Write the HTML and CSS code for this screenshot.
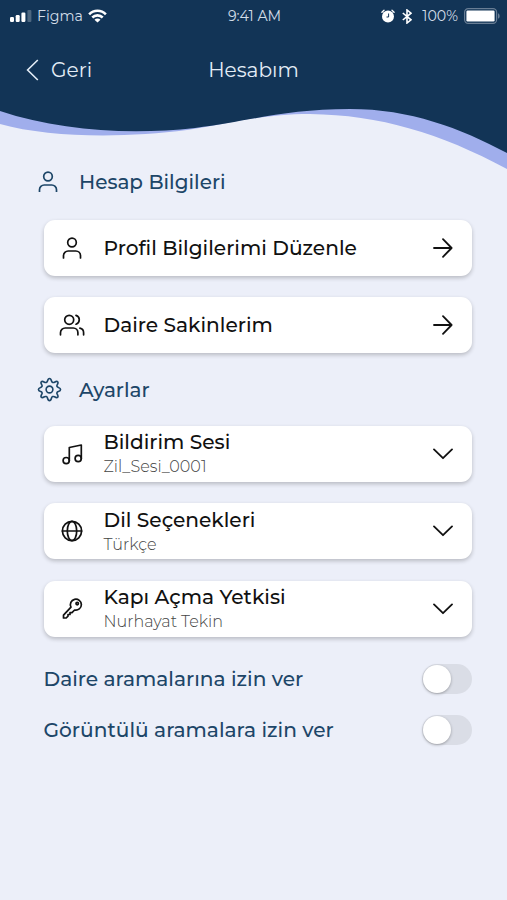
FILE: index.html
```
<!DOCTYPE html>
<html lang="tr">
  <head>
    <meta charset="UTF-8" />
    <meta name="viewport" content="width=device-width, initial-scale=1.0" />
    <title>Hesabım</title>
    <link rel="stylesheet" href="styles.css">
  </head>
  <body>
    <header class="header">
      <div class="status">
        <div class="status-left">
          <svg class="signal" width="22" height="12" viewBox="0 0 22 12" fill="#fff">
            <rect x="0" y="7" width="4" height="5" rx="1.2" />
            <rect x="5.7" y="5" width="4" height="7" rx="1.2" />
            <rect x="11.4" y="2.5" width="4" height="9.5" rx="1.2" />
            <rect x="17.4" y="0" width="4" height="12" rx="1" opacity="0.25" />
          </svg>
          <span class="carrier">Figma</span>
          <svg class="wifi" width="19" height="14" viewBox="0 0 20 14" fill="none" stroke="#fff" stroke-width="2.7">
            <path d="M1.2 5.2C6 .3 14 .3 18.8 5.2" />
            <path d="M4.5 8.6c3-3 8-3 11 0" />
            <path d="M10 13.8L6.8 10.9c1.8-1.6 4.6-1.6 6.4 0z" fill="#fff" stroke="none" />
          </svg>
        </div>
        <span class="time">9:41 AM</span>
        <div class="status-right">
          <svg width="14" height="14" viewBox="0 0 14 14">
            <circle cx="7" cy="7.5" r="6" fill="#fff" />
            <path d="M.9 3.2L3 1.2M13.1 3.2L11 1.2" stroke="#fff" stroke-width="1.3" stroke-linecap="round" />
            <path d="M7.6 4.5v3.5H5.5" fill="none" stroke="#123456" stroke-width="1" />
          </svg>
          <svg class="bluetooth" width="10" height="15" viewBox="0 0 10 15" fill="none" stroke="#fff" stroke-width="1.6">
            <path d="M.8 4L9 10.8 5 14V1l4 3.2L.8 11" />
          </svg>
          <span class="percent">100%</span>
          <svg class="battery" width="36" height="16" viewBox="0 0 36 16">
            <rect x=".6" y=".6" width="32" height="14.8" rx="3.6" fill="none" stroke="#687d94" stroke-width="1.2" />
            <rect x="2.4" y="2.6" width="28.2" height="10.8" rx="1.2" fill="#fff" />
            <path d="M34 5.2c2.2.8 2.2 4.8 0 5.6z" fill="#687d94" />
          </svg>
        </div>
      </div>
      <nav class="nav">
        <a class="back" href="#">
          <svg width="14" height="24" viewBox="0 0 14 24" fill="none" stroke="#e4edf6" stroke-width="1.6">
            <path d="M12.8 2L2.6 12l10.2 10" />
          </svg>
          <span>Geri</span>
        </a>
        <h1>Hesabım</h1>
      </nav>
    </header>
    <svg class="wave" width="507" height="70" viewBox="0 100 507 70">
      <path fill="#a0aeec" d="M0 100V124C50 138 125 138 187 130C230 124 260 114 310 114C380 115 440 133 507 169V100z" />
      <path fill="#123456" d="M0 99V111C60 131 130 135 195 128C250 121 285 109 350 109C410 109 460 128 507 153V99z" />
    </svg>

    <main>
      <h2 class="section">
        <svg width="24" height="24" viewBox="0 0 24 24">
          <circle cx="12" cy="6.5" r="4.3" />
          <path d="M3.5 22v-2.3a4.7 4.7 0 0 1 4.7-4.7h7.6a4.7 4.7 0 0 1 4.7 4.7V22" />
        </svg>
        <span>Hesap Bilgileri</span>
      </h2>
      <div class="cards">
        <a class="card" href="#">
          <svg class="icon" width="28" height="24" viewBox="0 0 28 24">
            <circle cx="14" cy="6.5" r="4.3" />
            <path d="M5.5 22v-2.3a4.7 4.7 0 0 1 4.7-4.7h7.6a4.7 4.7 0 0 1 4.7 4.7V22" />
          </svg>
          <span class="name">Profil Bilgilerimi Düzenle</span>
          <svg class="end" width="20" height="20" viewBox="0 0 20 20">
            <path d="M1 10h17.4M10 1.2l8.6 8.8-8.6 8.8" />
          </svg>
        </a>
        <a class="card" href="#">
          <svg class="icon" width="28" height="24" viewBox="0 0 28 24">
            <circle cx="11.2" cy="6.8" r="4.5" />
            <path d="M2.5 21.8v-2.1a4.7 4.7 0 0 1 4.7-4.7h8a4.7 4.7 0 0 1 4.7 4.7v2.1M18 2.4a4.6 4.6 0 0 1 0 8.8M21.9 15.1a4.7 4.7 0 0 1 3.7 4.6v2.1" />
          </svg>
          <span class="name">Daire Sakinlerim</span>
          <svg class="end" width="20" height="20" viewBox="0 0 20 20">
            <path d="M1 10h17.4M10 1.2l8.6 8.8-8.6 8.8" />
          </svg>
        </a>
      </div>

      <h2 class="section settings">
        <svg width="25" height="25" viewBox="0 0 26 26">
          <circle cx="13" cy="13" r="3.5" />
          <path d="M10.9 4.2C11.4 2.3 11.8 1.5 13 1.5s1.6.8 2.1 2.7c.4 1.4 1.8 2 3.1 1.2 1.7-1 2.5-1.3 3.3-.5s.5 1.6-.5 3.3c-.8 1.3-.2 2.2 1.2 2.7 1.5.5 2.3.9 2.3 2.1s-.8 1.6-2.3 2.1c-1.4.5-2 1.4-1.2 2.7 1 1.7 1.3 2.5.5 3.3s-1.6.5-3.3-.5c-1.3-.8-2.7-.2-3.1 1.2-.5 1.9-.9 2.7-2.1 2.7s-1.6-.8-2.1-2.7c-.4-1.4-1.8-2-3.1-1.2-1.7 1-2.5 1.3-3.3.5s-.5-1.6.5-3.3c.8-1.3.2-2.2-1.2-2.7C2.3 14.6 1.5 14.2 1.5 13s.8-1.6 2.3-2.1C5.2 10.4 5.8 9.5 5 8.2c-1-1.7-1.3-2.5-.5-3.3s1.6-.5 3.3.5c1.3.8 2.7.2 3.1-1.2z" />
        </svg>
        <span>Ayarlar</span>
      </h2>
      <div class="cards">
        <a class="card" href="#">
          <svg class="icon" width="28" height="24" viewBox="0 0 28 24">
            <circle cx="8.2" cy="18.6" r="3.1" />
            <circle cx="20.2" cy="16.5" r="3.1" />
            <path d="M11.3 18.6V5.5l12-2.5v13.5" />
          </svg>
          <div class="text">
            <span class="name">Bildirim Sesi</span>
            <span class="value">Zil_Sesi_0001</span>
          </div>
          <svg class="end" width="20" height="20" viewBox="0 0 20 20">
            <path d="M1 5.4l9 8.8 9-8.8" />
          </svg>
        </a>
        <a class="card" href="#">
          <svg class="icon" width="28" height="24" viewBox="0 0 28 24">
            <circle cx="14" cy="12" r="9.6" />
            <ellipse cx="14" cy="12" rx="4.7" ry="9.6" />
            <path d="M4.4 12h19.2" />
          </svg>
          <div class="text">
            <span class="name">Dil Seçenekleri</span>
            <span class="value">Türkçe</span>
          </div>
          <svg class="end" width="20" height="20" viewBox="0 0 20 20">
            <path d="M1 5.4l9 8.8 9-8.8" />
          </svg>
        </a>
        <a class="card" href="#">
          <svg class="icon" width="28" height="24" viewBox="0 0 28 24">
            <path d="M13 10.2A5.5 5.5 0 1 1 16.6 13L14 15.6h-2v1.9h-2v1.7l-1.8 1.8H5.5v-2.8z" />
            <circle cx="19.2" cy="6.6" r="1.2" />
          </svg>
          <div class="text">
            <span class="name">Kapı Açma Yetkisi</span>
            <span class="value">Nurhayat Tekin</span>
          </div>
          <svg class="end" width="20" height="20" viewBox="0 0 20 20">
            <path d="M1 5.4l9 8.8 9-8.8" />
          </svg>
        </a>
      </div>

      <div class="switches">
        <label class="switch-row">
          <span>Daire aramalarına izin ver</span>
          <span class="switch"></span>
        </label>
        <label class="switch-row">
          <span>Görüntülü aramalara izin ver</span>
          <span class="switch"></span>
        </label>
      </div>
    </main>
  </body>
</html>
```
FILE: styles.css
```
* {
  box-sizing: border-box;
}

body {
  margin: 0;
  min-height: 900px;
  background: #eceff9;
  color: #111;
  font-family: "Montserrat", "Inter", sans-serif;
  font-size: 20.15px;
  font-weight: 500;
}

a {
  color: inherit;
  text-decoration: none;
}

svg {
  display: block;
  flex: none;
}

.header {
  height: 100px;
  background: #123456;
  color: #e4edf6;
  font-weight: 400;
}

.status {
  display: grid;
  grid-template-columns: 1fr auto 1fr;
  align-items: center;
  height: 32px;
  padding: 0 8px 0 10px;
  font-size: 14.2px;
  color: #d3dde8;
}

.status-left,
.status-right {
  display: flex;
  align-items: center;
}

.status-right {
  justify-content: flex-end;
  margin-right: -1px;
}

.carrier {
  margin: 0 5px;
}

.bluetooth {
  margin: 0 10px 0 7px;
}

.percent {
  margin-right: 6px;
}

.nav {
  display: grid;
  grid-template-columns: 1fr auto 1fr;
  align-items: center;
  height: 75px;
  padding: 0 25px;
}

.back {
  display: flex;
  align-items: center;
  gap: 12px;
}

.nav h1 {
  margin: 0;
  font-size: inherit;
  font-weight: 400;
}

main {
  padding: 0 35px 0 43.5px;
}

.section {
  display: flex;
  align-items: center;
  gap: 19px;
  height: 26px;
  margin: -1px 0 24.6px -7.6px;
  font-size: 20px;
  font-weight: 500;
  color: #1d4668;
}

.section svg {
  fill: none;
  stroke: #1d4668;
  stroke-width: 1.7;
}

.section.settings {
  gap: 17.5px;
  margin: 24px 0 23px -7px;
}

.cards {
  display: grid;
  gap: 21.4px;
}

.card {
  display: flex;
  align-items: center;
  height: 56px;
  padding: 0 19px 0 14.5px;
  border-radius: 11px;
  background: #fff;
  box-shadow: 0 2px 4px rgba(0, 0, 0, 0.22);
}

.card svg {
  fill: none;
  stroke: #111;
  stroke-width: 1.7;
  stroke-linejoin: round;
  stroke-linecap: round;
}

.icon {
  margin-right: 17.5px;
}

.card .end {
  margin-left: auto;
  stroke-width: 1.8;
}

.text {
  display: flex;
  flex-direction: column;
}

.text .name {
  line-height: 26px;
}

.value {
  font-size: 16px;
  font-weight: 300;
  line-height: 23px;
  color: #444;
}

.switches {
  display: grid;
  gap: 21px;
  margin-top: 27px;
  color: #1d4668;
}

.switch-row {
  display: flex;
  align-items: center;
  justify-content: space-between;
  height: 30px;
}

.switch {
  width: 50px;
  height: 30px;
  padding: 1px;
  border-radius: 15px;
  background: #dadde6;
}

.switch::before {
  content: "";
  display: block;
  width: 28px;
  height: 28px;
  border-radius: 50%;
  background: #fff;
  box-shadow: 0 1px 3px rgba(0, 0, 0, 0.3);
}
```
